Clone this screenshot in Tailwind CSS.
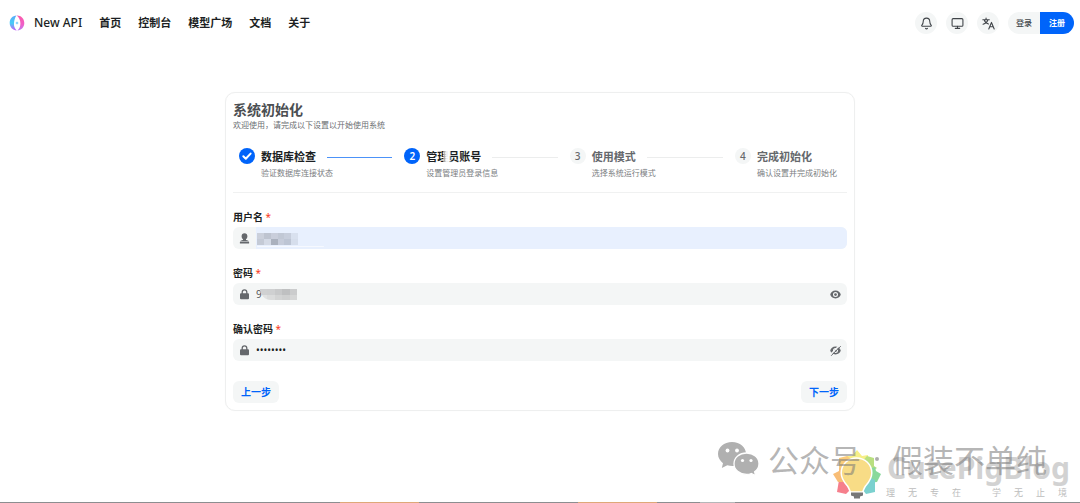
<!DOCTYPE html>
<html lang="zh-CN">
<head>
<meta charset="utf-8">
<meta name="viewport" content="width=device-width, initial-scale=1">
<title>系统初始化 - New API</title>
<script src="https://cdn.jsdelivr.net/npm/@tailwindcss/browser@4"></script>
</head>
<body class="relative flex min-h-screen flex-col overflow-x-hidden bg-white font-['Noto_Sans','Noto_Sans_CJK_SC',sans-serif] text-[#1c1f23]">
<header class="flex h-[46px] items-center justify-between pr-[6px] pl-[9px]">
  <div class="flex items-center gap-[17px]">
    <a href="#" class="flex items-center gap-[9px] text-[12px] font-medium">
      <svg class="size-4" viewBox="0 0 16 16" fill="none">
        <defs>
          <linearGradient id="cool" x1="0" y1="0" x2="0" y2="1"><stop stop-color="#5ba8f8"/><stop offset=".5" stop-color="#45cdf8"/><stop offset="1" stop-color="#c65cf5"/></linearGradient>
          <linearGradient id="warm" x1="0" y1="0" x2="0" y2="1"><stop stop-color="#fb5aa8"/><stop offset=".6" stop-color="#f05fc8"/><stop offset="1" stop-color="#b77bf6"/></linearGradient>
        </defs>
        <path d="M7.500.6C3.500.8.7 4 .7 8c0 4 2.900 7.200 7 7.500C5.500 13.500 4.700 11 5 8.300 5.200 5.300 6 2.600 7.500.6Z" fill="url(#cool)"/>
        <path d="M7.700.6c4.400-.2 7.600 3.200 7.600 7.400 0 4-2.800 7.200-6.900 7.500 2-1.600 3-4.200 3-7.200C11.400 5.200 10 2.500 7.700.6Z" fill="url(#warm)"/>
        <path d="M8 6.200 8.500 7.500 9.800 8 8.500 8.500 8 9.800 7.500 8.500 6.200 8l1.300-.5Z" fill="#58bdf8"/>
      </svg>
      <span>New API</span>
    </a>
    <nav class="flex items-center gap-[17px] text-[11px] font-bold">
      <a href="#">首页</a><a href="#">控制台</a><a href="#">模型广场</a><a href="#">文档</a><a href="#">关于</a>
    </nav>
  </div>
  <div class="flex items-center gap-[9px]">
    <button aria-label="通知" class="flex size-[22px] items-center justify-center rounded-full bg-[#f4f6f6]">
      <svg class="size-[13px]" viewBox="0 0 24 24" fill="none" stroke="#3f4348" stroke-width="2" stroke-linecap="round" stroke-linejoin="round"><path d="M10.300 21a2 2 0 0 0 3.400 0M3.300 15.300A1 1 0 0 0 4 17h16a1 1 0 0 0 .7-1.700C19.400 14 18 12.500 18 8A6 6 0 0 0 6 8c0 4.500-1.400 6-2.700 7.300"/></svg>
    </button>
    <button aria-label="主题" class="flex size-[22px] items-center justify-center rounded-full bg-[#f4f6f6]">
      <svg class="size-[13px]" viewBox="0 0 24 24" fill="none" stroke="#3f4348" stroke-width="2" stroke-linecap="round" stroke-linejoin="round"><rect x="2" y="3" width="20" height="14" rx="2"/><path d="M8 21h8M12 17v4"/></svg>
    </button>
    <button aria-label="语言" class="flex size-[22px] items-center justify-center rounded-full bg-[#f4f6f6]">
      <svg class="size-[13px]" viewBox="0 0 24 24" fill="none" stroke="#3f4348" stroke-width="2" stroke-linecap="round" stroke-linejoin="round"><path d="M1.500 5h12M7.500 2v3M11 5c-1 4-4.500 7-9 8.500M4 5c1 4 4.500 7 8 8M12.500 22l5-12 5 12M14.200 18h6.600"/></svg>
    </button>
    <div class="flex h-[22px] overflow-hidden rounded-full text-[8px]">
      <a href="#" class="flex w-8 items-center justify-center bg-[#f4f6f6] font-medium text-[#41464c]">登录</a>
      <a href="#" class="flex w-[34px] items-center justify-center bg-[#0064fa] font-bold text-white">注册</a>
    </div>
  </div>
</header>

<main class="px-4 pt-[46px]">
  <section class="mx-auto max-w-[630px] rounded-[10px] border border-[#eeefef] px-[7px] pt-[9px] pb-[7px] shadow-[0_0_1px_#eeefef]">
    <h1 class="text-[14px] leading-4 font-bold text-[#4b4e52]">系统初始化</h1>
    <p class="pt-px text-[8px] leading-3 text-[#6b6e72]">欢迎使用，请完成以下设置以开始使用系统</p>
    <ol class="mt-[17px] flex border-b border-[#f0f1f1] pr-[5px] pb-[13px] pl-[6px]">
      <li class="flex min-w-0 flex-1 gap-[6px]">
        <svg class="size-4 shrink-0" viewBox="0 0 16 16"><circle cx="8" cy="8" r="8" fill="#0064fa"/><path d="m4.300 8.300 2.500 2.500 4.800-5.200" fill="none" stroke="#fff" stroke-width="2" stroke-linecap="round" stroke-linejoin="round"/></svg>
        <div class="min-w-0 flex-1">
          <div class="flex items-center gap-[11px] pr-3"><span class="text-[11px] leading-[18px] font-bold whitespace-nowrap">数据库检查</span><span class="h-px flex-1 bg-[#4c92f8]"></span></div>
          <p class="pt-px text-[8px] leading-3 text-[#7b7e82]">验证数据库连接状态</p>
        </div>
      </li>
      <li class="flex min-w-0 flex-1 gap-[6px]">
        <span class="flex size-4 shrink-0 items-center justify-center rounded-full bg-[#0064fa] text-[10px] font-semibold text-white">2</span>
        <div class="min-w-0 flex-1">
          <div class="flex items-center gap-[11px] pr-3"><span class="relative text-[11px] leading-[18px] font-bold whitespace-nowrap">管理员账号<span class="absolute top-0 left-[17px] h-4 w-[8px] bg-linear-to-r from-white/40 via-white to-white/30"></span></span><span class="h-px flex-1 bg-[#eceded]"></span></div>
          <p class="pt-px text-[8px] leading-3 text-[#7b7e82]">设置管理员登录信息</p>
        </div>
      </li>
      <li class="flex min-w-0 flex-1 gap-[6px]">
        <span class="flex size-4 shrink-0 items-center justify-center rounded-full bg-[#f4f6f6] text-[10px] font-medium text-[#65686c]">3</span>
        <div class="min-w-0 flex-1">
          <div class="flex items-center gap-[11px] pr-3"><span class="text-[11px] leading-[18px] font-bold whitespace-nowrap text-[#65686c]">使用模式</span><span class="h-px flex-1 bg-[#eceded]"></span></div>
          <p class="pt-px text-[8px] leading-3 text-[#7b7e82]">选择系统运行模式</p>
        </div>
      </li>
      <li class="flex w-[107px] shrink-0 gap-[6px]">
        <span class="flex size-4 shrink-0 items-center justify-center rounded-full bg-[#f4f6f6] text-[10px] font-medium text-[#65686c]">4</span>
        <div>
          <p class="text-[11px] leading-[18px] font-bold whitespace-nowrap text-[#65686c]">完成初始化</p>
          <p class="pt-px text-[8px] leading-3 whitespace-nowrap text-[#7b7e82]">确认设置并完成初始化</p>
        </div>
      </li>
    </ol>

    <form class="pt-4">
      <div class="flex flex-col gap-4">
        <div>
          <label for="username" class="block pb-[2px] text-[10px] leading-4 font-bold">用户名 <span class="font-normal text-[#f93920]">*</span></label>
          <div class="relative flex h-[22px] items-center overflow-hidden rounded-[6px] bg-[#f4f6f6]">
            <svg class="mx-[6px] size-[11px] shrink-0" viewBox="0 0 11 11" fill="#65686c"><path d="M5.500.2C7.300.2 8.400 1.500 8.400 3.200c0 1.400-.6 2.500-1.400 3.100v.6c1.600.4 3 .9 3 1.600H1c0-.7 1.400-1.200 3-1.600v-.6C3.200 5.700 2.600 4.600 2.600 3.200 2.600 1.500 3.700.2 5.500.2Z"/><rect x=".8" y="9.100" width="9.400" height="1.300" rx=".4"/></svg>
            <input id="username" type="text" autocomplete="username" class="h-full min-w-0 flex-1 bg-[#e8f0fe] text-[10px] outline-none">
            <span class="absolute top-[6px] left-[24px] grid h-3 w-[41px] grid-cols-6 grid-rows-2" aria-hidden="true">
              <i class="bg-[#cbd0db]"></i><i class="bg-[#bec4d0]"></i><i class="bg-[#c9cedb]"></i><i class="bg-[#c1c8d5]"></i><i class="bg-[#c7cedc]"></i><i class="bg-[#d9e1ef]"></i>
              <i class="bg-[#c4cad6]"></i><i class="bg-[#d4dae6]"></i><i class="bg-[#aab1be]"></i><i class="bg-[#c6ccda]"></i><i class="bg-[#bdc5d4]"></i><i class="bg-[#d6deec]"></i>
            </span>
            <span class="absolute bottom-[2px] left-[24px] h-px w-[67px] rounded-full bg-white/60" aria-hidden="true"></span>
          </div>
        </div>
        <div>
          <label for="password" class="block pb-[2px] text-[10px] leading-4 font-bold">密码 <span class="font-normal text-[#f93920]">*</span></label>
          <div class="relative flex h-[22px] items-center rounded-[6px] bg-[#f4f6f6]">
            <svg class="mx-[6px] size-[11px] shrink-0" viewBox="0 0 11 11"><path d="M3.200 5V3.200a2.300 2.300 0 0 1 4.600 0V5" fill="none" stroke="#65686c" stroke-width="1.300"/><rect x="1" y="4.300" width="9" height="6" rx="1" fill="#65686c"/></svg>
            <input id="password" type="text" value="9" class="h-full min-w-0 flex-1 bg-transparent text-[10px] text-[#54575b] outline-none">
            <span class="absolute top-[6px] left-[27px] grid h-[11px] w-[37px] grid-cols-5 grid-rows-2 overflow-hidden rounded-bl-[12px]" aria-hidden="true">
              <i class="bg-[#d0d1d2]"></i><i class="bg-[#cfd0d1]"></i><i class="bg-[#c8c9ca]"></i><i class="bg-[#bfc0c1]"></i><i class="bg-[#cbcccd]"></i>
              <i class="bg-[#e1e2e2]"></i><i class="bg-[#dbdcdc]"></i><i class="bg-[#d3d4d4]"></i><i class="bg-[#cfd0d0]"></i><i class="bg-[#d5d6d6]"></i>
            </span>
            <button type="button" aria-label="隐藏密码" class="px-[6px]">
              <svg class="h-[11px] w-[11px]" viewBox="0 0 24 24"><path fill="#65686c" fill-rule="evenodd" d="M12 3.500C6 3.500 1.500 8 .5 12c1 4 5.500 8.500 11.500 8.500S22.500 16 23.500 12C22.500 8 18 3.500 12 3.500ZM12 17.500a5.500 5.500 0 1 0 0-11 5.500 5.500 0 0 0 0 11Z"/><circle cx="12" cy="12" r="3" fill="#65686c"/></svg>
            </button>
          </div>
        </div>
        <div>
          <label for="confirm" class="block pb-[2px] text-[10px] leading-4 font-bold">确认密码 <span class="font-normal text-[#f93920]">*</span></label>
          <div class="flex h-[22px] items-center rounded-[6px] bg-[#f4f6f6]">
            <svg class="mx-[6px] size-[11px] shrink-0" viewBox="0 0 11 11"><path d="M3.200 5V3.200a2.300 2.300 0 0 1 4.600 0V5" fill="none" stroke="#65686c" stroke-width="1.300"/><rect x="1" y="4.300" width="9" height="6" rx="1" fill="#65686c"/></svg>
            <input id="confirm" type="password" value="abcdefgh" autocomplete="new-password" class="h-full min-w-0 flex-1 bg-transparent text-[10px] outline-none">
            <button type="button" aria-label="显示密码" class="px-[6px]">
              <svg class="h-[11px] w-[11px]" viewBox="0 0 24 24"><path fill="#65686c" fill-rule="evenodd" d="M12 3.500C6 3.500 1.500 8 .5 12c1 4 5.500 8.500 11.500 8.500S22.500 16 23.500 12C22.500 8 18 3.500 12 3.500ZM12 17.500a5.500 5.500 0 1 0 0-11 5.500 5.500 0 0 0 0 11Z"/><circle cx="12" cy="12" r="3" fill="#65686c"/><path d="M1 20.500 20.500 1" stroke="#f4f6f6" stroke-width="3"/><path d="M3 23 23 3" stroke="#65686c" stroke-width="2" stroke-linecap="round"/></svg>
            </button>
          </div>
        </div>
      </div>
      <div class="mt-5 flex justify-between text-[10px] font-bold text-[#0064fa]">
        <button type="button" class="h-[22px] w-[46px] rounded-[6px] bg-[#f4f6f6]">上一步</button>
        <button type="button" class="h-[22px] w-[46px] rounded-[6px] bg-[#f4f6f6]">下一步</button>
      </div>
    </form>
  </section>
</main>

<!-- Watermarks laid over the page corner -->
<div class="pointer-events-none absolute right-0 bottom-0 h-[70px] w-[370px]">
  <svg class="absolute top-[8px] left-[7px] h-[36px] w-[43px]" viewBox="0 0 43 36">
    <path fill="#b0b0b0" d="M15 1C7 1 1 6.200 1 13c0 3.700 2 6.900 5 9.200L4.800 27l5.500-2.800c2 .6 4 .8 6.400.7C23.600 24.600 29 19.400 29 13 29 6.200 23 1 15 1Z"/>
    <path fill="#b0b0b0" stroke="#fff" stroke-width="1.300" d="M29.500 12C22.500 12 17 16.700 17 22.700s5.500 10.700 12.500 10.700c1.800 0 3.300-.3 4.900-.9l4.300 2.300-1.100-4c2.700-1.900 4.400-4.800 4.400-8.100C42 16.700 36.500 12 29.500 12Z"/>
    <g fill="#fff"><circle cx="10.500" cy="9.500" r="1.900"/><circle cx="20" cy="9.500" r="1.900"/><circle cx="25.500" cy="19.500" r="1.600"/><circle cx="34" cy="19.500" r="1.600"/></g>
  </svg>
  <div class="absolute top-[20px] left-[177px] text-[30px] leading-none font-bold text-[#d2d2d2]">CutePigBlog</div>
  <svg class="absolute top-[16px] left-[122px] h-[50px] w-[50px]" viewBox="0 0 50 50">
    <path fill="#f7ef87" d="M15 7 20 7 25 1l5 6 6-1v12H15Z"/>
    <path fill="#b9df80" d="m35 7 7 2v8l3 2-9 6-8-10Z"/>
    <path fill="#89d99b" d="m43 18 1 4 5 3-4 8-9 1V20Z"/>
    <path fill="#7bd1cf" d="m43 31 0 12-9 2-7-9 10-8Z"/>
    <path fill="#f67f8c" d="M7 31 5 43l9 2 8-8-9-10Z"/>
    <path fill="#f8bd76" d="m7 18 0 4-6 3 5 8h12V18Z"/>
    <path fill="#fbcb7a" d="M15 7 7 9v10l10 4 5-11Z"/>
    <path fill="#f8dc86" stroke="#fff" stroke-width="1.500" d="M24.500 9C16 9 9.200 15.500 9.200 24c0 6 3.300 9.500 6.300 13 1.500 2 2 4.500 3 6h12c1-1.500 1.500-4 3-6 3-3.500 6.300-7 6.300-13 0-8.500-6.800-15-15.300-15Z"/>
    <path fill="#777" d="M19 43.500h12v3l-3 1v2h-6v-2l-3-1Z"/>
  </svg>
  <div class="absolute top-[10px] left-[58px] flex items-center font-['Noto_Sans_CJK_SC',sans-serif] text-[31px] leading-none whitespace-nowrap text-[#777]/55">
    <span>公众号</span><span class="flex w-[31px] justify-center"><i class="size-1 rounded-full bg-[#777]/60"></i></span><span>假装不单纯</span>
  </div>
  <div class="absolute top-[54px] left-[176px] flex text-[9px] leading-3 text-[#bdbdbd]">
    <span class="flex w-[106px] gap-[13px]"><b class="font-normal">理</b><b class="font-normal">无</b><b class="font-normal">专</b><b class="font-normal">在</b></span>
    <span class="flex gap-[13px]"><b class="font-normal">学</b><b class="font-normal">无</b><b class="font-normal">止</b><b class="font-normal">境</b></span>
  </div>
</div>
<div class="absolute inset-x-0 bottom-0 flex h-px bg-[#8c8e90]" aria-hidden="true">
  <span class="ml-[31.5%] w-[7.3%] bg-[#dfa878]"></span><span class="ml-[14.7%] w-[7.3%] bg-[#dfa878]"></span><span class="ml-[4%] w-[3.3%] bg-[#b5b7b9]"></span>
</div>
</body>
</html>
